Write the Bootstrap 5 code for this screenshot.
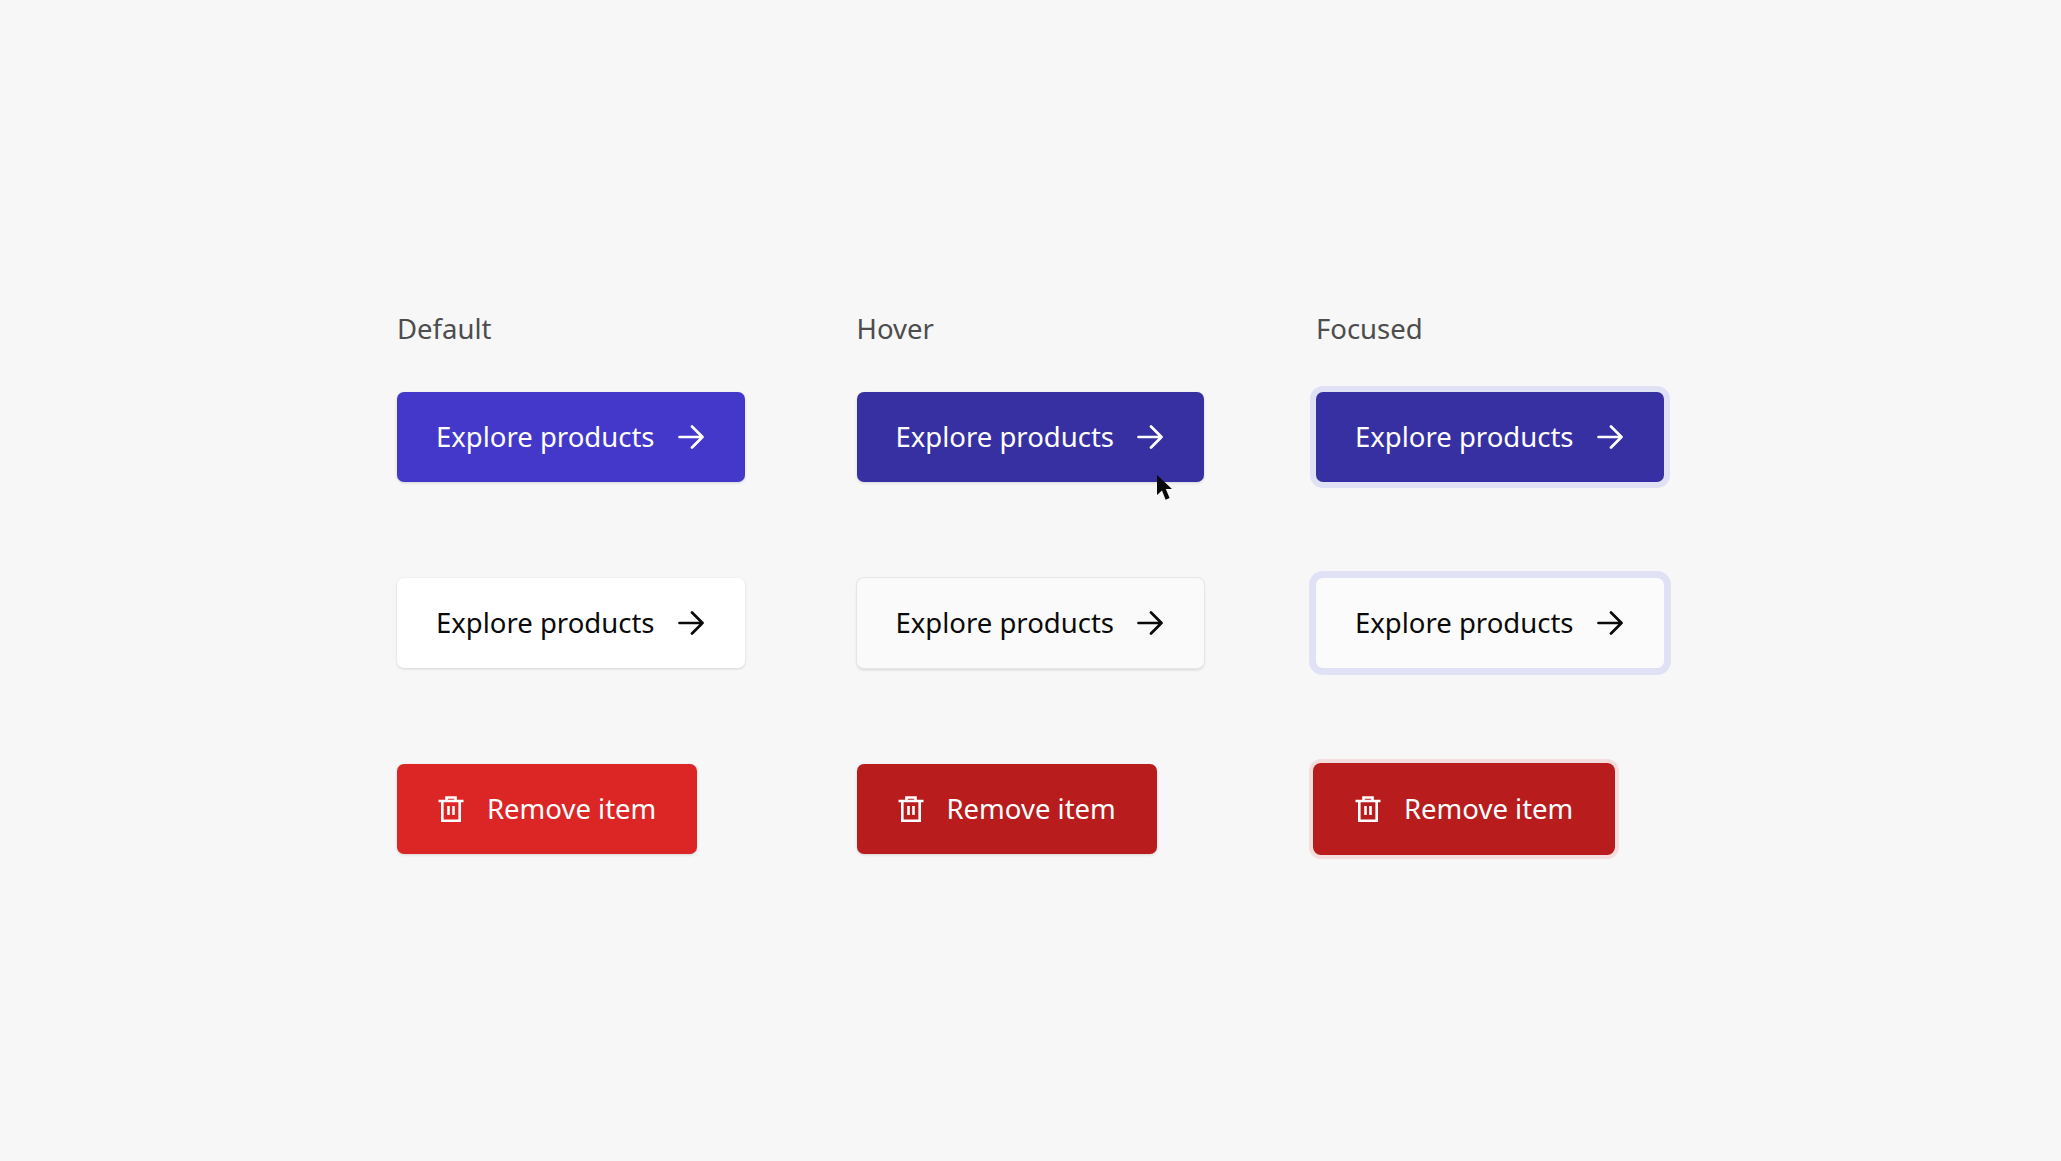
<!DOCTYPE html>
<html lang="en">
<head>
    <meta charset="UTF-8">
    <meta name="viewport" content="width=device-width, initial-scale=1.0">
    <title>Button states</title>
    <link href="https://cdn.jsdelivr.net/npm/bootstrap@5.3.0/dist/css/bootstrap.min.css" rel="stylesheet">
    <style>
        html, body { height: 100%; }
        body { background-color: #f7f7f7; font-family: "Noto Sans", "Open Sans", sans-serif; overflow: hidden; }
        .states-grid { display: grid; grid-template-columns: repeat(3, 459.5px); padding: 310px 0 0 397px; }
        .state-label { color: #4d4d4d; font-size: 27.5px; line-height: 38px; height: 82px; }
        .state-cell { height: 186px; }
        .demo-btn { display: inline-flex; align-items: center; height: 90px; padding: 0 41px 0 39px; font-size: 27.5px; line-height: 38px; font-weight: 400; border: 0; border-radius: 7px; box-shadow: 0 1px 3px rgba(0, 0, 0, .14); }
        .demo-btn svg { flex-shrink: 0; }
        .demo-gap { gap: 23px; }
        .demo-gap-lg { gap: 23px; padding-left: 41px; padding-right: 41px; }
        .btn-indigo, .btn-indigo:hover { background-color: #4338ca; color: #fff; }
        .btn-indigo-dark, .btn-indigo-dark:hover { background-color: #3730a3; color: #fff; }
        .btn-plain, .btn-plain:hover { background-color: #fff; color: #0a0a0a; }
        .btn-plain-hover, .btn-plain-hover:hover { background-color: #fafafa; color: #0a0a0a; box-shadow: 0 0 0 1px #e6e6e6, 0 2px 3px rgba(0, 0, 0, .14); }
        .btn-red, .btn-red:hover { background-color: #dc2626; color: #fff; }
        .btn-red-dark, .btn-red-dark:hover { background-color: #b91c1c; color: #fff; }
        .ring-indigo { box-shadow: 0 0 0 6px #e0e1f4; }
        .ring-plain { background-color: #fbfbfb; box-shadow: 0 0 0 7px #e0e1f4; }
        .ring-red { box-shadow: 0 0 0 1px #b91c1c, 0 0 0 5px #f4dedd; margin-left: -2px; }
        .hover-wrap { position: relative; display: inline-block; }
        .mouse-cursor { position: absolute; left: 300px; top: 83px; }
    </style>
</head>
<body>
    <main class="states-grid">
        <div class="state-label">Default</div>
        <div class="state-label">Hover</div>
        <div class="state-label">Focused</div>

        <div class="state-cell">
            <button type="button" class="btn demo-btn demo-gap btn-indigo">Explore products
                <svg width="26" height="26" viewBox="0 0 26 26" fill="none" stroke="currentColor" stroke-width="2.7" stroke-linecap="round" stroke-linejoin="round"><path d="M1.5 13h23M14 2.5 24.5 13 14 23.5"/></svg>
            </button>
        </div>
        <div class="state-cell">
            <div class="hover-wrap">
                <button type="button" class="btn demo-btn demo-gap btn-indigo-dark">Explore products
                    <svg width="26" height="26" viewBox="0 0 26 26" fill="none" stroke="currentColor" stroke-width="2.7" stroke-linecap="round" stroke-linejoin="round"><path d="M1.5 13h23M14 2.5 24.5 13 14 23.5"/></svg>
                </button>
                <svg class="mouse-cursor" width="15" height="26" viewBox="0 0 15 26"><path d="M0 0v20l5-4.6 3.6 9.4 4-1.7-3.8-9H15z" fill="#0a0a0a"/></svg>
            </div>
        </div>
        <div class="state-cell">
            <button type="button" class="btn demo-btn demo-gap btn-indigo-dark ring-indigo">Explore products
                <svg width="26" height="26" viewBox="0 0 26 26" fill="none" stroke="currentColor" stroke-width="2.7" stroke-linecap="round" stroke-linejoin="round"><path d="M1.5 13h23M14 2.5 24.5 13 14 23.5"/></svg>
            </button>
        </div>

        <div class="state-cell">
            <button type="button" class="btn demo-btn demo-gap btn-plain">Explore products
                <svg width="26" height="26" viewBox="0 0 26 26" fill="none" stroke="currentColor" stroke-width="2.7" stroke-linecap="round" stroke-linejoin="round"><path d="M1.5 13h23M14 2.5 24.5 13 14 23.5"/></svg>
            </button>
        </div>
        <div class="state-cell">
            <button type="button" class="btn demo-btn demo-gap btn-plain-hover">Explore products
                <svg width="26" height="26" viewBox="0 0 26 26" fill="none" stroke="currentColor" stroke-width="2.7" stroke-linecap="round" stroke-linejoin="round"><path d="M1.5 13h23M14 2.5 24.5 13 14 23.5"/></svg>
            </button>
        </div>
        <div class="state-cell">
            <button type="button" class="btn demo-btn demo-gap btn-plain ring-plain">Explore products
                <svg width="26" height="26" viewBox="0 0 26 26" fill="none" stroke="currentColor" stroke-width="2.7" stroke-linecap="round" stroke-linejoin="round"><path d="M1.5 13h23M14 2.5 24.5 13 14 23.5"/></svg>
            </button>
        </div>

        <div class="state-cell">
            <button type="button" class="btn demo-btn demo-gap-lg btn-red">
                <svg width="26" height="26" viewBox="0 0 26 26" fill="none" stroke="currentColor" stroke-width="2.6"><path d="M.5 5h25M8.5 5V1.5h9V5M4.3 5v19.700h17.400V5"/><path d="M10.500 10v9M15.500 10v9"/></svg>
                Remove item
            </button>
        </div>
        <div class="state-cell">
            <button type="button" class="btn demo-btn demo-gap-lg btn-red-dark">
                <svg width="26" height="26" viewBox="0 0 26 26" fill="none" stroke="currentColor" stroke-width="2.6"><path d="M.5 5h25M8.5 5V1.5h9V5M4.3 5v19.700h17.400V5"/><path d="M10.500 10v9M15.500 10v9"/></svg>
                Remove item
            </button>
        </div>
        <div class="state-cell">
            <button type="button" class="btn demo-btn demo-gap-lg btn-red-dark ring-red">
                <svg width="26" height="26" viewBox="0 0 26 26" fill="none" stroke="currentColor" stroke-width="2.6"><path d="M.5 5h25M8.5 5V1.5h9V5M4.3 5v19.700h17.400V5"/><path d="M10.500 10v9M15.500 10v9"/></svg>
                Remove item
            </button>
        </div>
    </main>

    <script src="https://cdn.jsdelivr.net/npm/bootstrap@5.3.0/dist/js/bootstrap.bundle.min.js"></script>
</body>
</html>
